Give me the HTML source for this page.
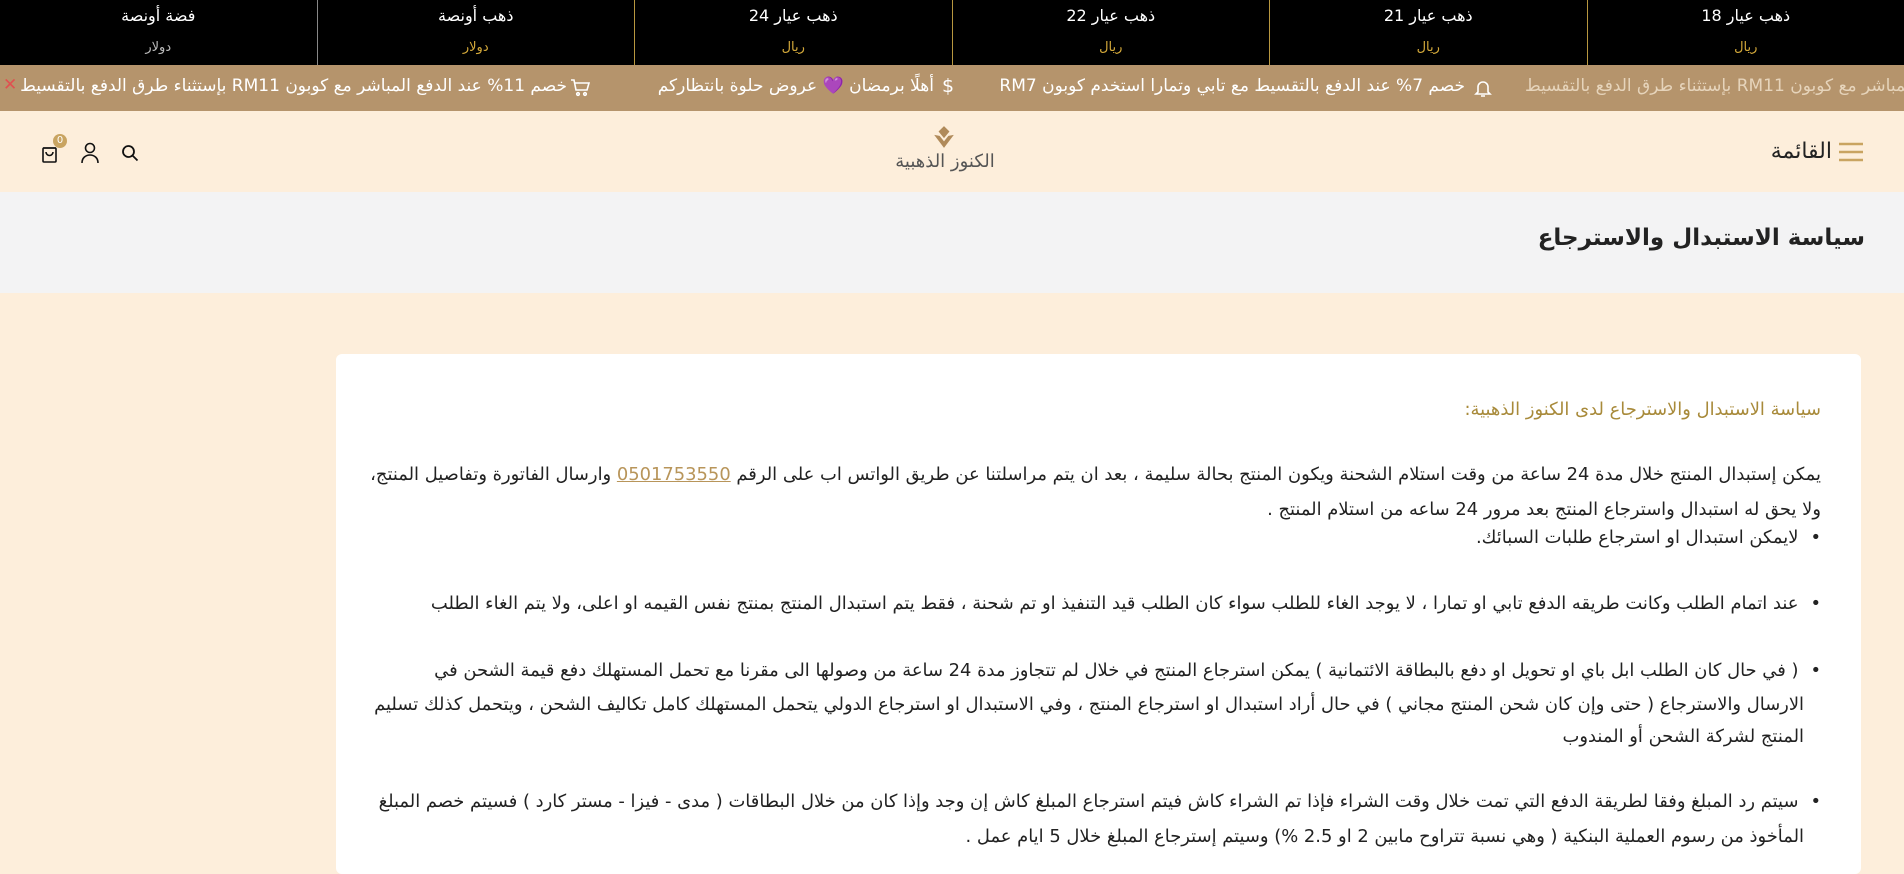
<!DOCTYPE html>
<html dir="rtl"><head><meta charset="utf-8"><style>
*{margin:0;padding:0;box-sizing:border-box}
body{width:1904px;height:855px;overflow:hidden;background:#fdeedb;font-family:"DejaVu Sans","Liberation Sans",sans-serif;position:relative}
.top{position:absolute;top:0;left:0;width:1904px;height:65px;background:#000;display:flex;direction:ltr}
.col{flex:1;position:relative;color:#fff;text-align:center}
.col+.col{border-left:1px solid #b8973f}
.col .t{position:absolute;top:6px;width:100%;font-size:16px}
.col .s{position:absolute;top:40px;width:100%;font-size:13px;color:#d4a93a}
.promo{position:absolute;top:65px;left:0;width:1904px;height:46px;background:#b5946c;color:#fff;font-size:17px;white-space:nowrap;overflow:hidden}
.promo span{position:absolute;top:11px;direction:rtl}
.hdr{position:absolute;top:111px;left:0;width:1904px;height:81px;background:#fdeedb}
.band{position:absolute;top:192px;left:0;width:1904px;height:101px;background:#f3f3f4}
.card{position:absolute;left:336px;top:354px;width:1525px;height:520px;background:#fff;border-radius:6px}
.ln{position:absolute;right:40px;white-space:nowrap;font-size:17.9px;color:#222;line-height:22px}
.b{right:40px}
.b i{font-style:normal;margin-left:12px}
.c{right:57px}
.gold{color:#a88a3a}
a{color:#b8955a;text-decoration:underline}
</style></head><body>
<div class="top">
<div class="col"><div class="t">فضة أونصة</div><div class="s" style="color:#bbb">دولار</div></div>
<div class="col" style="border-left-color:#888"><div class="t">ذهب أونصة</div><div class="s">دولار</div></div>
<div class="col"><div class="t">ذهب عيار 24</div><div class="s">ريال</div></div>
<div class="col"><div class="t">ذهب عيار 22</div><div class="s">ريال</div></div>
<div class="col"><div class="t">ذهب عيار 21</div><div class="s">ريال</div></div>
<div class="col"><div class="t">ذهب عيار 18</div><div class="s">ريال</div></div>
</div>
<div class="promo">
<span style="left:3px;color:#e05050;font-size:17px;top:10px;direction:ltr">✕</span>
<span style="right:1337px">خصم 11% عند الدفع المباشر مع كوبون RM11 بإستثناء طرق الدفع بالتقسيط</span>
<svg style="position:absolute;left:570px;top:14px" width="20" height="18" viewBox="0 0 20 18" fill="none" stroke="#fff" stroke-width="1.6"><path d="M1 1h3l2 10h11l2-7H5"/><circle cx="8" cy="15" r="1.3"/><circle cx="15" cy="15" r="1.3"/></svg>
<span style="right:970px">أهلًا برمضان 💜 عروض حلوة بانتظاركم</span>
<span style="left:942px;top:10px;direction:ltr;font-size:19px">$</span>
<span style="right:439px">خصم 7% عند الدفع بالتقسيط مع تابي وتمارا استخدم كوبون RM7</span>
<svg style="position:absolute;left:1473px;top:13px" width="20" height="20" viewBox="0 0 20 20" fill="none" stroke="#fff" stroke-width="1.6"><path d="M5 14V9a5 5 0 0 1 10 0v5l2 2H3z M8 18h4"/></svg>
<span style="left:1525px;color:#e6d4bb">خصم 11% عند الدفع المباشر مع كوبون RM11 بإستثناء طرق الدفع بالتقسيط</span>
</div>
<div class="hdr">
<div style="position:absolute;right:40px;top:28px;font-size:22px;color:#222;display:flex;align-items:center;gap:6px">
<svg width="26" height="20" viewBox="0 0 26 20"><path d="M1 2h24M1 10h24M1 18h24" stroke="#c9a461" stroke-width="2.5"/></svg><span>القائمة</span></div>
<svg style="position:absolute;left:932px;top:15px" width="24" height="22" viewBox="0 0 22 20"><path d="M11 20L2 8l5 1 4 5 4-5 5-1z M11 11L6 5l5-5 5 5z" fill="#b08a5a"/></svg>
<div style="position:absolute;left:880px;top:40px;font-size:18px;color:#555;width:130px;text-align:center;font-weight:300">الكنوز الذهبية</div>
<svg style="position:absolute;left:40px;top:32px" width="20" height="20" viewBox="0 0 20 20" fill="none" stroke="#111" stroke-width="1.6"><rect x="3" y="5" width="13" height="14" rx="1"/><path d="M6 9a3 3 0 0 0 7 0M3 5h13"/></svg>
<div style="position:absolute;left:53px;top:23px;width:14px;height:14px;border-radius:7px;background:#c9a461;color:#fff;font-size:10px;text-align:center;line-height:14px">0</div>
<svg style="position:absolute;left:80px;top:31px" width="20" height="22" viewBox="0 0 20 22" fill="none" stroke="#111" stroke-width="1.6"><circle cx="10" cy="6" r="4.5"/><path d="M2 21c0-5 3.5-8 8-8s8 3 8 8"/></svg>
<svg style="position:absolute;left:121px;top:33px" width="18" height="18" viewBox="0 0 18 18" fill="none" stroke="#111" stroke-width="1.8"><circle cx="7.5" cy="7.5" r="5.5"/><path d="M11.5 11.5l5 5"/></svg>
</div>
<div class="band"></div>
<h1 style="position:absolute;right:39px;top:225px;font-size:23px;font-weight:bold;color:#222">سياسة الاستبدال والاسترجاع</h1>
<div class="card">
<div class="ln gold" style="top:45px">سياسة الاستبدال والاسترجاع لدى الكنوز الذهبية:</div>
<div class="ln" style="top:110px">يمكن إستبدال المنتج خلال مدة 24 ساعة من وقت استلام الشحنة ويكون المنتج بحالة سليمة ، بعد ان يتم مراسلتنا عن طريق الواتس اب على الرقم <a>0501753550</a> وارسال الفاتورة وتفاصيل المنتج،</div>
<div class="ln" style="top:145px">ولا يحق له استبدال واسترجاع المنتج بعد مرور 24 ساعه من استلام المنتج .</div>
<div class="ln b" style="top:173px"><i>•</i>لايمكن استبدال او استرجاع طلبات السبائك.</div>
<div class="ln b" style="top:239px"><i>•</i>عند اتمام الطلب وكانت طريقه الدفع تابي او تمارا ، لا يوجد الغاء للطلب سواء كان الطلب قيد التنفيذ او تم شحنة ، فقط يتم استبدال المنتج بمنتج نفس القيمه او اعلى، ولا يتم الغاء الطلب</div>
<div class="ln b" style="top:306px"><i>•</i>( في حال كان الطلب ابل باي او تحويل او دفع بالبطاقة الائتمانية ) يمكن استرجاع المنتج في خلال لم تتجاوز مدة 24 ساعة من وصولها الى مقرنا مع تحمل المستهلك دفع قيمة الشحن في</div>
<div class="ln c" style="top:340px">الارسال والاسترجاع ( حتى وإن كان شحن المنتج مجاني ) في حال أراد استبدال او استرجاع المنتج ، وفي الاستبدال او استرجاع الدولي يتحمل المستهلك كامل تكاليف الشحن ، ويتحمل كذلك تسليم</div>
<div class="ln c" style="top:372px">المنتج لشركة الشحن أو المندوب</div>
<div class="ln b" style="top:437px"><i>•</i>سيتم رد المبلغ وفقا لطريقة الدفع التي تمت خلال وقت الشراء فإذا تم الشراء كاش فيتم استرجاع المبلغ كاش إن وجد وإذا كان من خلال البطاقات ( مدى - فيزا - مستر كارد ) فسيتم خصم المبلغ</div>
<div class="ln c" style="top:472px">المأخوذ من رسوم العملية البنكية ( وهي نسبة تتراوح مابين 2 او 2.5 %) وسيتم إسترجاع المبلغ خلال 5 ايام عمل .</div>
</div>
</body></html>
